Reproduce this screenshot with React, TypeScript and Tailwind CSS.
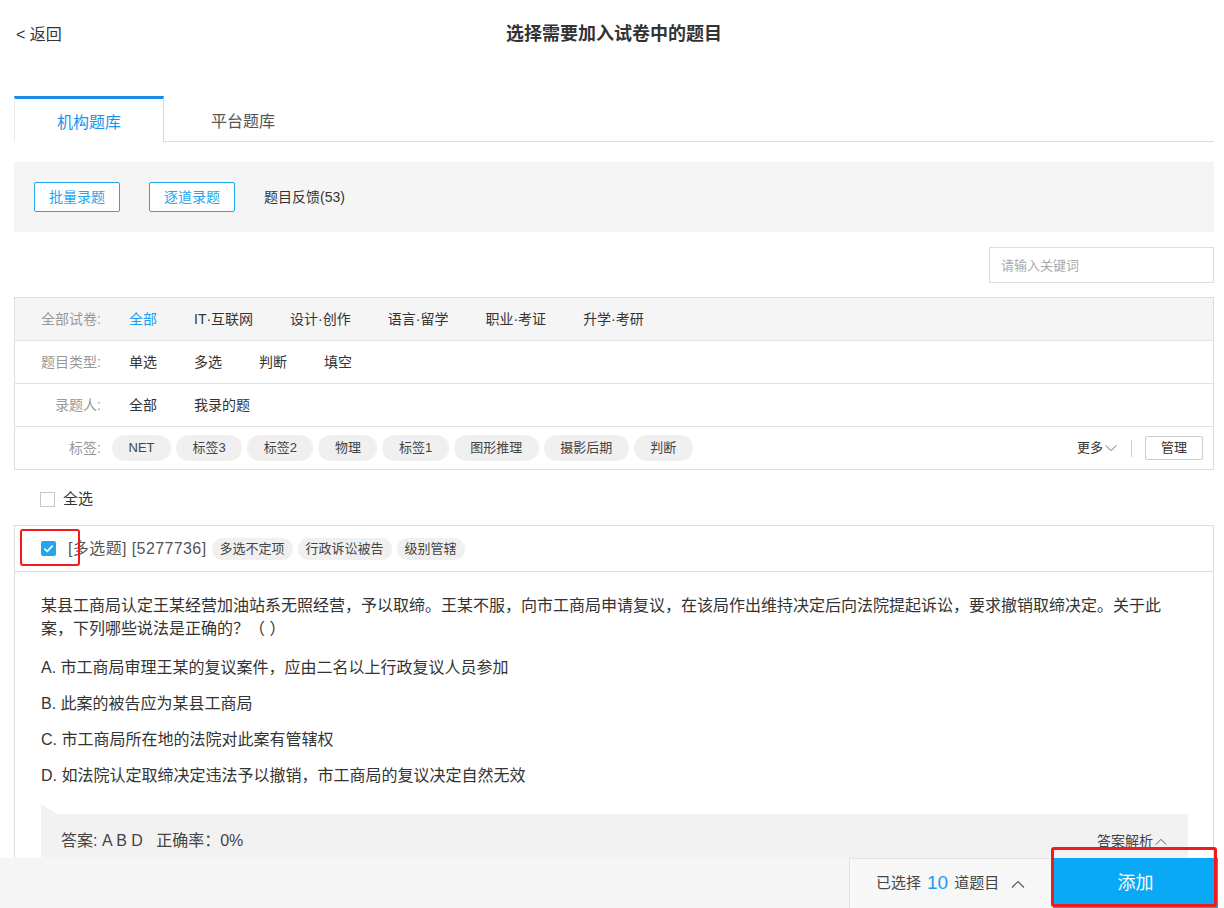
import clsx from 'clsx';

const PAPERS = ['全部', 'IT·互联网', '设计·创作', '语言·留学', '职业·考证', '升学·考研'];
const TYPES = ['单选', '多选', '判断', '填空'];
const AUTHORS = ['全部', '我录的题'];
const TAGS = ['NET', '标签3', '标签2', '物理', '标签1', '图形推理', '摄影后期', '判断'];
const Q_TAGS = ['多选不定项', '行政诉讼被告', '级别管辖'];
const OPTIONS = [
    'A. 市工商局审理王某的复议案件，应由二名以上行政复议人员参加',
    'B. 此案的被告应为某县工商局',
    'C. 市工商局所在地的法院对此案有管辖权',
    'D. 如法院认定取缔决定违法予以撤销，市工商局的复议决定自然无效',
];

const Chevron = ({ up = false, className }: { up?: boolean, className?: string }) => (
    <svg viewBox="0 0 14 8" className={clsx('inline-block', className)} fill="none" stroke="currentColor" strokeWidth="1.1">
        {up ? <polyline points="1,7.5 7,1.5 13,7.5" /> : <polyline points="1,0.5 7,6.5 13,0.5" />}
    </svg>
);

const FilterRow = ({ label, items, active, gray }: { label: string, items: string[], active?: number, gray?: boolean }) => (
    <div className={clsx('flex items-center', gray ? 'h-[42px] bg-[#f5f5f5]' : 'h-[43px] border-t border-[#e3e3e3]')}>
        <div className="w-[86px] text-right text-[14px] text-[#999]">{label}</div>
        <div className="ml-[28px] flex gap-[37px] text-[14px]">
            {items.map((it, i) => (
                <span key={it} className={i === active ? 'text-[#1a9cf0]' : 'text-[#333]'}>{it}</span>
            ))}
        </div>
    </div>
);

export default function App() {
    return (
        <div className="relative h-[908px] overflow-hidden bg-white font-['Liberation_Sans','Noto_Sans_CJK_SC',sans-serif] text-[#333]">
            <div className="pl-[14px] pr-[10px]">
                {/* header */}
                <div className="grid h-[68px] grid-cols-[1fr_auto_1fr] items-center">
                    <div className="pl-[2px] pt-[2px] text-[16px] text-[#333]">&lt; 返回</div>
                    <div className="text-[18px] font-bold text-[#333]">选择需要加入试卷中的题目</div>
                    <div />
                </div>

                {/* tabs */}
                <div className="mt-[28px] flex h-[46px] border-b border-[#ddd]">
                    <div className="flex h-[46px] w-[150px] items-center justify-center border-t-[3px] border-r border-l border-t-[#1a8ce8] border-r-[#d5d5d5] border-l-[#ececec] bg-white pt-[4px] text-[16px] text-[#1c93ea]">
                        机构题库
                    </div>
                    <div className="flex w-[158px] items-center justify-center pt-[7px] text-[16px] text-[#555]">平台题库</div>
                </div>

                {/* toolbar */}
                <div className="mt-[20px] flex h-[70px] items-center gap-[29px] bg-[#f5f5f5] pl-[20px]">
                    <button className="h-[30px] w-[86px] rounded-[2px] border border-[#1ea7f0] bg-white text-[14px] text-[#1ea7f0]">批量录题</button>
                    <button className="h-[30px] w-[86px] rounded-[2px] border border-[#1ea7f0] bg-white text-[14px] text-[#1ea7f0]">逐道录题</button>
                    <span className="text-[14px] text-[#333]">题目反馈(53)</span>
                </div>

                {/* search */}
                <div className="mt-[15px] flex justify-end">
                    <input
                        placeholder="请输入关键词"
                        className="h-[36px] w-[225px] border border-[#ddd] px-[11px] text-[13px] outline-none placeholder:text-[#aaa]"
                    />
                </div>

                {/* filters */}
                <div className="mt-[14px] border border-[#ddd]">
                    <FilterRow label="全部试卷:" items={PAPERS} active={0} gray />
                    <FilterRow label="题目类型:" items={TYPES} />
                    <FilterRow label="录题人:" items={AUTHORS} />
                    <div className="flex h-[43px] items-center border-t border-[#e3e3e3]">
                        <div className="w-[86px] text-right text-[14px] text-[#999]">标签:</div>
                        <div className="ml-[11px] flex gap-[5px]">
                            {TAGS.map((t, i) => (
                                <span key={t + i} className="flex h-[26px] items-center rounded-full bg-[#f0f0f0] px-[16.5px] text-[13px] text-[#444]">{t}</span>
                            ))}
                        </div>
                        <div className="ml-auto flex items-center pr-[10px]">
                            <span className="flex items-center text-[13px] text-[#333]">
                                更多<Chevron className="ml-[1px] h-[7px] w-[14px] text-[#666]" />
                            </span>
                            <span className="mx-[13px] h-[17px] w-px bg-[#ccc]" />
                            <button className="h-[24px] w-[58px] rounded-[2px] border border-[#ccc] bg-white text-[13px] text-[#333]">管理</button>
                        </div>
                    </div>
                </div>

                {/* select all */}
                <div className="mt-[18px] flex h-[22px] items-center pl-[26px]">
                    <span className="h-[15px] w-[15px] border border-[#c8c8c8] bg-white" />
                    <span className="ml-[8px] text-[15px] text-[#333]">全选</span>
                </div>

                {/* question card */}
                <div className="mt-[15px] border-x border-t border-[#ddd]">
                    <div className="flex h-[46px] items-center border-b border-[#ddd] pl-[26px]">
                        <span className="flex h-[15px] w-[15px] items-center justify-center rounded-[2px] bg-[#23a6f2]">
                            <svg viewBox="0 0 12 12" className="h-[11px] w-[11px]" fill="none" stroke="white" strokeWidth="1.8">
                                <polyline points="1.5,6.2 4.6,9 10.5,2.8" />
                            </svg>
                        </span>
                        <span className="ml-[12px] text-[16px] tracking-[0.4px] text-[#555]">[多选题] [5277736]</span>
                        <div className="ml-[5px] flex gap-[5px]">
                            {Q_TAGS.map(t => (
                                <span key={t} className="flex h-[22px] items-center rounded-full bg-[#f0f0f0] px-[8px] text-[13px] text-[#444]">{t}</span>
                            ))}
                        </div>
                    </div>

                    <div className="pl-[26px] pr-[25px] pt-[22px]">
                        <p className="max-w-[1130px] text-[16px] leading-[23px] text-[#333]">
                            某县工商局认定王某经营加油站系无照经营，予以取缔。王某不服，向市工商局申请复议，在该局作出维持决定后向法院提起诉讼，要求撤销取缔决定。关于此案，下列哪些说法是正确的？（ ）
                        </p>
                        <div className="mt-[10px]">
                            {OPTIONS.map(o => (
                                <div key={o} className="text-[16px] leading-[36px] text-[#333]">{o}</div>
                            ))}
                        </div>

                        <div className="mt-[10px]">
                            <div className="h-0 w-0 border-r-[16px] border-b-[10px] border-r-transparent border-b-[#f2f2f2]" />
                            <div className="flex items-start justify-between bg-[#f2f2f2] px-[20px] pt-[17px] pb-[30px] leading-[20px]">
                                <span className="text-[16px] text-[#444]">答案: A B D&nbsp;&nbsp;&nbsp;正确率：0%</span>
                                <span className="flex items-center text-[14px] text-[#444]">
                                    答案解析<Chevron up className="ml-[1px] h-[7px] w-[14px] text-[#555]" />
                                </span>
                            </div>
                        </div>
                    </div>
                </div>
            </div>

            {/* annotation around the question checkbox */}
            <div className="absolute left-[20px] top-[529px] h-[37px] w-[60px] rounded-[3px] border-[2.5px] border-[#f21a1a]" />

            {/* bottom bar */}
            <div className="absolute bottom-0 left-0 right-[6px] flex h-[50px] justify-end bg-[#f5f5f5]">
                <div className="flex w-[204px] items-center border-l border-t border-[#e3e3e3] bg-[#f7f7f7] pl-[26px] text-[15px] text-[#444]">
                    已选择<span className="mx-[6px] text-[19px] text-[#1a9cf0]">10</span>道题目
                    <Chevron up className="ml-[12px] h-[8px] w-[14px] text-[#555]" />
                </div>
                <button className="w-[165px] bg-[#0aa9f5] text-[18px] text-white">添加</button>
            </div>
            <div className="absolute left-[1051px] top-[847px] h-[60px] w-[166px] rounded-[3px] border-[3px] border-[#f21a1a]" />
        </div>
    );
}
